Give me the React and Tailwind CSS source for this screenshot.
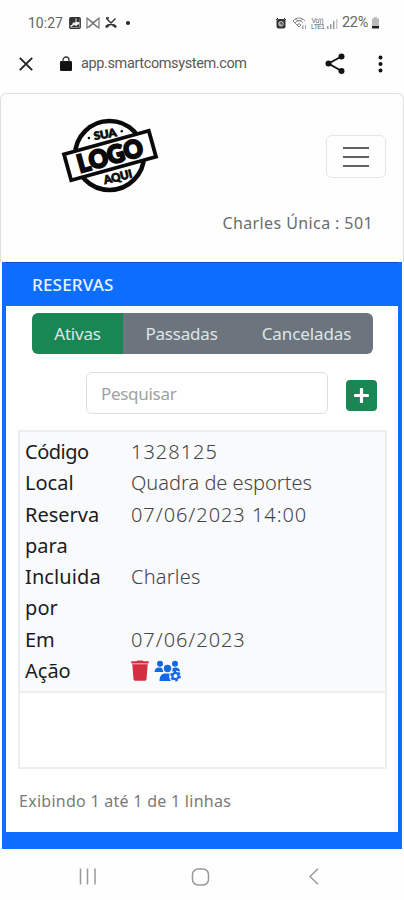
import { FaPlus } from 'react-icons/fa'

const tabs = [
  { label: 'Ativas', className: 'w-[91px] bg-[#198754] tracking-[-0.2px]' },
  { label: 'Passadas', className: 'w-[117px] bg-[#6c757d] tracking-[-0.2px]' },
  { label: 'Canceladas', className: 'w-[133px] bg-[#6c757d] tracking-[-0.1px]' },
]

const fields = [
  { label: 'Código', value: '1328125', labelClass: 'tracking-[-0.5px]', valueClass: 'tracking-[1px]' },
  { label: 'Local', value: 'Quadra de esportes', labelClass: '', valueClass: '' },
  { label: 'Reserva para', value: '07/06/2023 14:00', labelClass: '', valueClass: 'tracking-[0.95px]' },
  { label: 'Incluida por', value: 'Charles', labelClass: 'tracking-[0.1px]', valueClass: 'tracking-[0.2px]' },
  { label: 'Em', value: '07/06/2023', labelClass: '', valueClass: 'tracking-[0.95px]' },
]

const StatusBar = () => (
  <div className="flex h-11 items-center pt-[2px] pl-7 pr-[24px] text-[14px] text-[#666]">
    <span className="w-[36px] font-['Roboto',sans-serif]">10:27</span>
    <svg className="ml-[5px]" width="12" height="12" viewBox="0 0 12 12">
      <rect x="0.800" y="0.800" width="10.400" height="10.400" rx="1" fill="#eee" stroke="#333" strokeWidth="1.400" />
      <path d="M1 1h5.500v4.500H4L3 8H1zM7.500 1h3v4h-3zM2 10l3-2 2 1 3-2v3z" fill="#333" />
    </svg>
    <svg className="ml-[5px]" width="14" height="12" viewBox="0 0 14 12" fill="none" stroke="#777" strokeWidth="1.200">
      <path d="M1 1v10l5-4h2l5 4V1L8 5H6zM2 2l9 8M12 2l-9 8" />
    </svg>
    <svg className="ml-[5px]" width="12" height="12" viewBox="0 0 12 12" fill="none" stroke="#333" strokeWidth="1.400">
      <path d="M1.500 1.500l4.500 4.500 4.500-4.500M1 1h3M1 10.500c1-4 9-4 10 0" />
      <path d="M1 10l3-2M11 10l-3-2" strokeWidth="2.600" />
    </svg>
    <span className="ml-[9px] size-[4px] rounded-full bg-[#222]" />

    <svg className="ml-auto" width="10" height="11" viewBox="0 0 10 11">
      <rect x="0.500" y="1" width="9" height="9.500" rx="2" fill="#333" />
      <circle cx="5" cy="5.800" r="2.800" fill="#aaa" />
      <path d="M5 4v2h2M0 2l2-2M10 2L8 0" fill="none" stroke="#333" />
    </svg>
    <svg className="ml-[6px]" width="15" height="13" viewBox="0 0 15 13" fill="none" stroke="#888">
      <path d="M1 4c3-4 9-4 12 0M3 6c2-3 6-3 8 0M5 8c1-1.500 3-1.500 4 0M1 4l6 6 2-2M3 2c2 2 6 2 8 0" />
      <path d="M11 8v4M9.500 10l1.500 2M13.500 8v4" strokeWidth="0.800" />
    </svg>
    <svg className="ml-[4px]" width="14" height="14" viewBox="0 0 14 14" fontFamily="Liberation Sans, sans-serif" fill="#666">
      <text x="0.500" y="7" fontSize="7" textLength="12">Vo))</text>
      <text x="0" y="13" fontSize="7" textLength="14">LTE1</text>
    </svg>
    <svg className="ml-[2px]" width="11" height="11" viewBox="0 0 11 11" fill="#999">
      <path d="M0 8h1.500v3H0zM3 6h1.500v5H3zM6 3h1.500v8H6z" />
      <path d="M9 1h1.500v10H9z" fill="#ccc" />
    </svg>
    <span className="ml-[4px] w-[29px] font-['Roboto',sans-serif] text-[14.500px] tracking-[-0.300px]">22%</span>
    <svg width="9" height="12" viewBox="0 0 9 12">
      <path d="M3 0h3v1.500h2V10H1V1.500h2z" fill="#bbb" />
      <path d="M1 9h7v2.500H1z" fill="#222" />
    </svg>
  </div>
)

const BrowserBar = () => (
  <div className="flex h-[49px] items-center pb-[9px] pl-[19px] pr-[21px]">
    <svg width="14" height="14" viewBox="0 0 14 14" fill="none" stroke="#222" strokeWidth="1.900">
      <path d="M0.800 0.800l12.400 12.400M13.200 0.800L0.800 13.200" />
    </svg>
    <svg className="ml-[27px]" width="12" height="16" viewBox="0 0 12 16">
      <rect x="0" y="5" width="12" height="10" rx="1.200" fill="#111" />
      <path d="M3 6V4a3 3 0 0 1 6 0v2" fill="none" stroke="#333" strokeWidth="1.300" />
    </svg>
    <span className="ml-[9px] font-['Roboto',sans-serif] text-[14.500px] tracking-[-0.380px] text-[#5a5a5a]">
      app.smartcomsystem.com
    </span>
    <svg className="ml-auto" width="20" height="22" viewBox="0 0 20 22" fill="#111">
      <path d="M16.500 3.500L3.500 10.500l13 7.500" fill="none" stroke="#111" strokeWidth="1.900" />
      <circle cx="16.500" cy="3.500" r="3" />
      <circle cx="3.500" cy="10.500" r="3" />
      <circle cx="16.500" cy="18" r="3" />
    </svg>
    <svg className="ml-[33px]" width="5" height="18" viewBox="0 0 5 18" fill="#111">
      <circle cx="2.500" cy="2.500" r="2" />
      <circle cx="2.500" cy="9" r="2" />
      <circle cx="2.500" cy="15.500" r="2" />
    </svg>
  </div>
)

const Logo = () => (
  <svg
    className="mt-[22px] ml-[59px]"
    width="102"
    height="80"
    viewBox="0 0 102 80"
    fontFamily="Lato, sans-serif"
    fontWeight="900"
    textAnchor="middle"
    fill="#0a0a0a"
    stroke="#0a0a0a"
  >
    <circle cx="49.500" cy="39.500" r="34.500" fill="#fff" strokeWidth="4.500" />
    <g transform="rotate(-15.500 50 39.500)">
      <rect x="6" y="26" width="88" height="27" fill="#fff" strokeWidth="3.800" />
      <text x="50" y="48.300" fontSize="24.500" textLength="67" lengthAdjust="spacingAndGlyphs" strokeWidth="2.200">
        LOGO
      </text>
    </g>
    <g transform="rotate(-10 46 18)">
      <text x="45" y="22" fontSize="11" textLength="23" lengthAdjust="spacingAndGlyphs" strokeWidth="0.800">SUA</text>
      <circle cx="28.500" cy="19" r="0.800" />
      <circle cx="62" cy="18" r="0.800" />
    </g>
    <text x="57.500" y="65" fontSize="11.500" textLength="29" lengthAdjust="spacingAndGlyphs" strokeWidth="0.800" transform="rotate(-14 57.500 60)">
      AQUI
    </text>
  </svg>
)

const TrashIcon = () => (
  <svg width="18" height="21" viewBox="0 0 18 21" fill="#d32f43">
    <path d="M0.300 1.200h5.200L6.500 0.500h5l1 0.700h5.200v2.300H0.300zM1.300 4h15.400L15.500 19.300a1.500 1.500 0 0 1-1.500 1.400H4a1.500 1.500 0 0 1-1.500-1.400z" />
    <path d="M1.500 4h15" stroke="#eda0a9" strokeWidth="0.800" />
  </svg>
)

const UsersGearIcon = () => (
  <svg width="27" height="22" viewBox="0 0 27 22" fill="#1468e6">
    <circle cx="6" cy="3.700" r="3" />
    <circle cx="21" cy="3.700" r="3" />
    <circle cx="13.500" cy="8.500" r="3.700" />
    <path d="M0.500 12c0-3 2-4.500 4.500-4.500 1.500 0 2.700.5 3.500 1.200 0 1.400.4 2.500 1 3.300zM18.500 8.500c.8-.7 1.800-1 3-1 2.700 0 4.500 1.500 4.500 4l-3-.8-5 .8c.4-.8.6-1.800.5-3zM5.500 21c0-5 2-7.500 6-7.500h4c-.7 3-.2 5.700 1.500 7.500z" />
    <circle cx="21.500" cy="16" r="3.100" fill="none" stroke="#1468e6" strokeWidth="2.200" />
    <circle cx="21.500" cy="16" r="4.500" fill="none" stroke="#1468e6" strokeWidth="1.800" strokeDasharray="2.360 2.360" />
  </svg>
)

const Header = () => (
  <div className="h-[169px] rounded-t-[6px] border-x border-t border-[#dfdfdf]">
    <div className="flex justify-between pr-[17px]">
      <Logo />
      <button className="mt-[41px] flex h-[43px] w-[60px] flex-col items-center justify-center gap-[7px] rounded-[6px] border border-[#e6e6e6]">
        <span className="h-[2px] w-[26px] bg-[#606060]" />
        <span className="h-[2px] w-[26px] bg-[#606060]" />
        <span className="h-[2px] w-[26px] bg-[#606060]" />
      </button>
    </div>
    <p className="mt-[15px] pr-[30px] text-right text-[16px] leading-[24px] tracking-[0.4px] text-[#6c6c6c]">
      Charles Única : 501
    </p>
  </div>
)

const Reservations = () => (
  <div className="ml-[2px] mr-[2px] flex h-[587px] flex-col border-x-4 border-b-[17px] border-[#0d6efd] bg-white">
    <h1 className="h-[44px] border-t border-[#0a4fc0] bg-[#0d6efd] pl-[26px] text-[17px] leading-[43px] font-medium tracking-[0.2px] text-[#eaf2ff]">
      RESERVAS
    </h1>

    <div className="mt-[7px] ml-[26px] flex h-[41px] w-[341px] overflow-hidden rounded-[6px] text-[17px] text-[#dfe5e8]">
      {tabs.map((tab) => (
        <button key={tab.label} className={tab.className}>
          {tab.label}
        </button>
      ))}
    </div>

    <div className="mt-[18px] ml-[80px] flex items-center">
      <input
        className="h-[42px] w-[242px] rounded-[6px] border border-[#dcdfe1] px-[14px] text-[17px] tracking-[-0.3px] placeholder:text-[#a0a0a0]"
        placeholder="Pesquisar"
      />
      <button className="mt-[4px] ml-[18px] flex size-[31px] items-center justify-center rounded-[4px] bg-[#198754] text-white">
        <FaPlus size={17} />
      </button>
    </div>

    <div className="mt-[16px] ml-[12px] w-[369px] border-2 border-[#eceeef]">
      <div className="h-[261px] border-b-2 border-[#eceeef] bg-[#f9fafc] pt-[4px] pl-[5px] text-[20px] leading-[31.300px]">
        {fields.map(({ label, value, labelClass, valueClass }) => (
          <div key={label} className="flex">
            <span className="w-[106px] pr-[20px] text-[#1c1c1c]">
              <span className={labelClass}>{label}</span>
            </span>
            <span className={valueClass}>
              <span className="font-light text-[#444]">{value}</span>
            </span>
          </div>
        ))}
        <div className="flex">
          <span className="w-[106px] text-[#1c1c1c]">Ação</span>
          <span className="flex items-center gap-[5px]">
            <TrashIcon />
            <UsersGearIcon />
          </span>
        </div>
      </div>
      <div className="h-[74px]" />
    </div>

    <p className="mt-[20px] ml-[13px] text-[16px] leading-[24px] tracking-[0.27px] text-[#7a7a7a]">
      Exibindo 1 até 1 de 1 linhas
    </p>
  </div>
)

const SystemNav = () => (
  <div className="flex h-[51px] items-center pt-[4px] pl-[79px]">
    <svg width="18" height="17" viewBox="0 0 18 17" stroke="#999" strokeWidth="1.500">
      <path d="M1.500 0.500v16M8.500 0.500v16M16 0.500v16" />
    </svg>
    <svg className="ml-[94px]" width="19" height="18" viewBox="0 0 19 18" fill="none" stroke="#999" strokeWidth="1.500">
      <rect x="1.500" y="1" width="16" height="16" rx="5.500" />
    </svg>
    <svg className="ml-[99px]" width="10" height="17" viewBox="0 0 10 17" fill="none" stroke="#999" strokeWidth="1.500">
      <path d="M9 0.800L1 8.500l8 7.700" />
    </svg>
  </div>
)

const App = () => (
  <div className="h-[900px] w-[404px] overflow-hidden bg-[#fefefe] font-['Noto_Sans',sans-serif]">
    <StatusBar />
    <BrowserBar />
    <Header />
    <Reservations />
    <SystemNav />
  </div>
)

export default App
